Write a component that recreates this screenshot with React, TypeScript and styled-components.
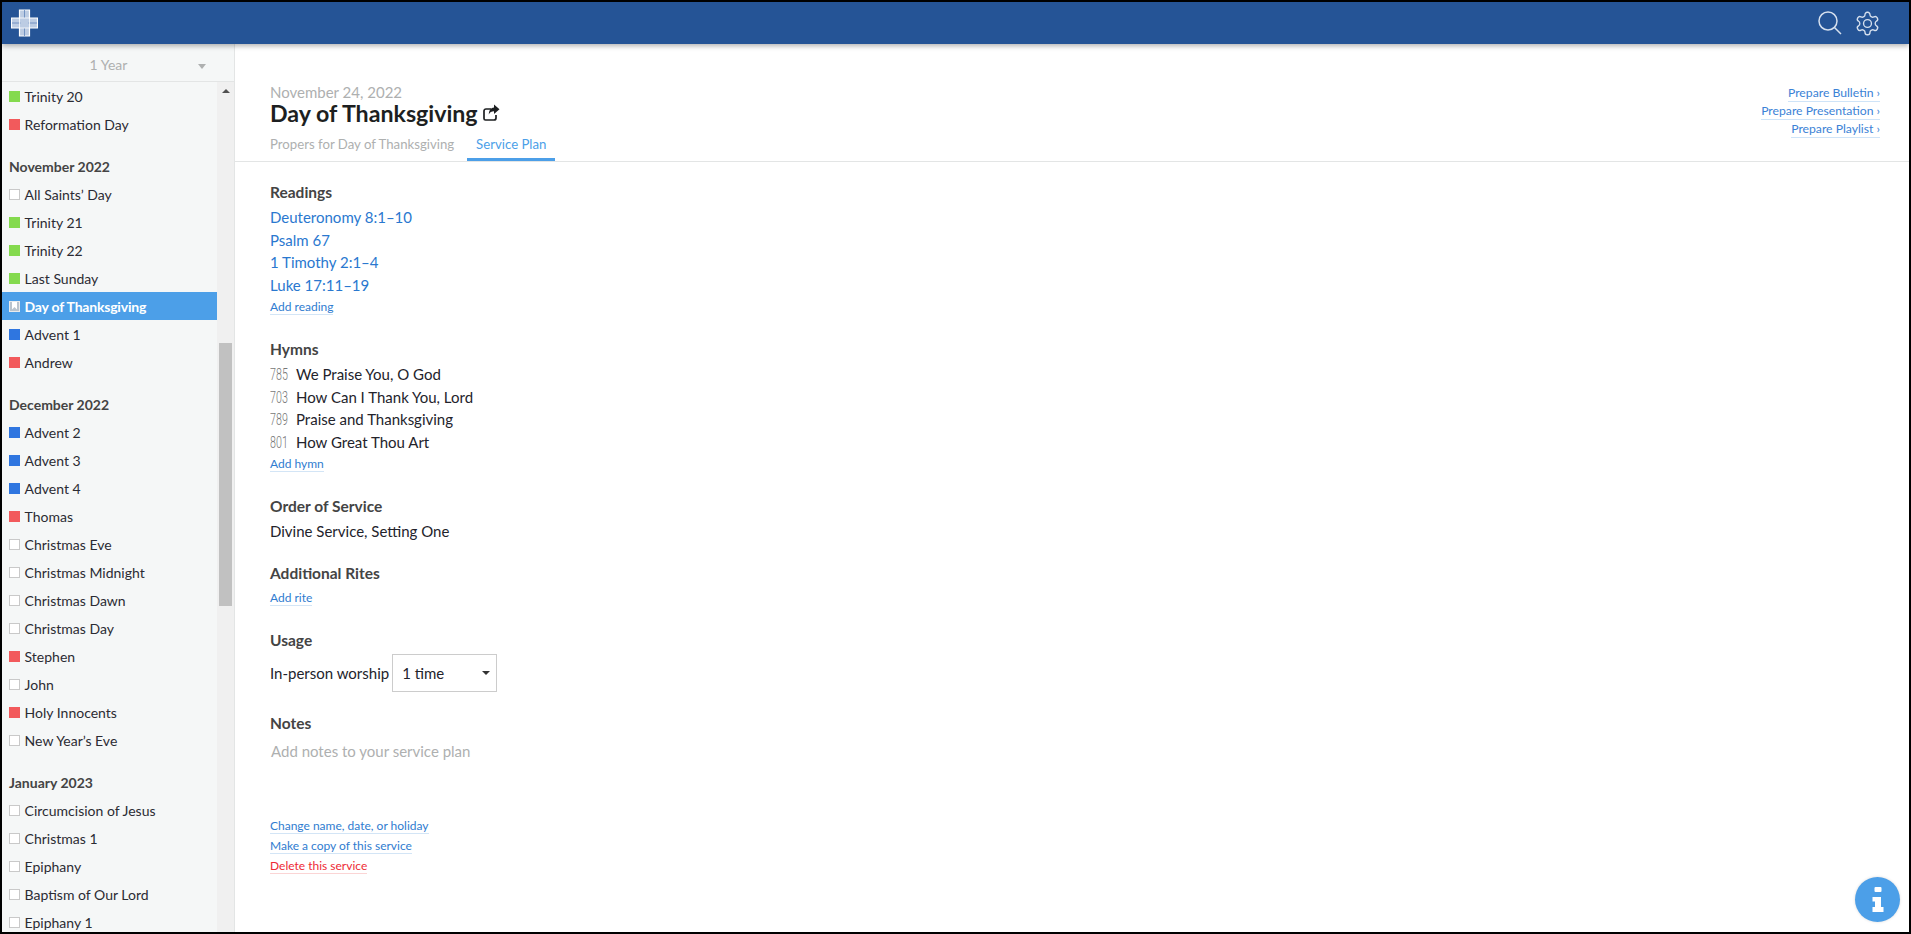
import React from "react";
import styled, { createGlobalStyle } from "styled-components";

const Global = createGlobalStyle`
  html, body { margin: 0; padding: 0; height: 100%; overflow: hidden; }
  body { font-family: Lato, "Open Sans", sans-serif; color: #222; background: #fff; }
  #root { height: 100%; }
  * { box-sizing: border-box; }
`;

const Frame = styled.div`
  width: 1911px; height: 934px; border: 2px solid #000; display: flex; flex-direction: column; overflow: hidden; position: relative; background: #fff;
`;
const Header = styled.header`
  height: 42px; flex: none; background: #255496; display: flex; align-items: center; justify-content: space-between;
  padding: 0 28px 0 9px; box-shadow: 0 2px 5px rgba(0,0,0,.3); position: relative; z-index: 2;
`;
const HeaderIcons = styled.div`display: flex; align-items: center; gap: 12px;`;
const Body = styled.div`display: flex; flex: 1; min-height: 0;`;
const Sidebar = styled.aside`
  width: 233px; flex: none; background: #f5f7f7; border-right: 1px solid #e3e5e5; display: flex; flex-direction: column; min-height: 0;
`;
const YearSelect = styled.div`
  height: 38px; flex: none; border-bottom: 1px solid #e3e5e5; display: flex; align-items: center; justify-content: center; position: relative;
  font-size: 14px; color: #aeb0b0; padding: 3px 19px 0 0;
`;
const YearCaret = styled.i`
  position: absolute; right: 28px; top: 20px; border: 4px solid transparent; border-top: 5px solid #aeb0b0; border-bottom: 0;
`;
const ListWrap = styled.div`display: flex; flex: 1; min-height: 0; overflow: hidden;`;
const List = styled.div`flex: 1; min-width: 0;`;
const Track = styled.div`width: 17px; flex: none; background: #f0f0f0; position: relative;`;
const Thumb = styled.div`position: absolute; left: 2px; right: 2px; top: 261px; height: 263px; background: #c1c1c1;`;
const TrackArrow = styled.i`
  position: absolute; left: 5px; top: 7px; border: 4px solid transparent; border-bottom: 4px solid #505050; border-top: 0;
`;
const Row = styled.div<{ $active?: boolean }>`
  height: 28px; display: flex; align-items: center; padding-left: 7px; gap: 4.6px; font-size: 14px; white-space: nowrap;
  background: ${p => (p.$active ? "#4c9fe8" : "transparent")};
  color: ${p => (p.$active ? "#fff" : "#2b2b33")};
  font-weight: ${p => (p.$active ? 700 : 400)};
  letter-spacing: ${p => (p.$active ? "-0.2px" : "0")};
`;
const Swatch = styled.span<{ $color?: string }>`
  width: 11px; height: 11px; flex: none; display: block;
  background: ${p => p.$color ?? "#fff"};
  border: ${p => (p.$color ? "none" : "1px solid #c9c9c9")};
`;
const ActiveMark = styled.span`
  width: 11px; height: 11px; flex: none; background: #b9c3cd; border: 1px solid #e8eaec; position: relative;
  &::after { content: ""; position: absolute; left: 2px; top: 0; width: 5px; height: 8px; background: #fff; clip-path: polygon(0 0,100% 0,100% 100%,50% 70%,0 100%); }
`;
const Month = styled.div`
  font-size: 14px; font-weight: 700; color: #444; height: 28px; margin-top: 14px; display: flex; align-items: center; padding-left: 7px;
`;
const Main = styled.main`flex: 1; min-width: 0; display: flex; flex-direction: column; position: relative;`;
const Top = styled.div`
  height: 118px; flex: none; border-bottom: 1px solid #e3e5e5; padding: 40px 0 0 35px; position: relative;
`;
const DateLine = styled.div`font-size: 15px; line-height: 17px; color: #aeb0b0;`;
const TitleRow = styled.div`display: flex; align-items: flex-start; gap: 5px; height: 26px;`;
const Title = styled.h1`font-size: 23.2px; line-height: 25px; margin: 0; font-weight: 700; color: #1d1f21;`;
const ShareSvg = styled.svg`margin-top: 3px; flex: none;`;
const Tabs = styled.div`display: flex; position: absolute; left: 35px; bottom: 0; height: 28px;`;
const Tab = styled.div<{ $active?: boolean }>`
  font-size: 13.2px; height: 28px; line-height: 23px; padding: 0 ${p => (p.$active ? "9px" : "0")}; margin-right: ${p => (p.$active ? "0" : "13px")};
  color: ${p => (p.$active ? "#4c9fe8" : "#aeb0b0")};
  border-bottom: 3px solid ${p => (p.$active ? "#4c9fe8" : "transparent")};
`;
const Prepare = styled.div`
  position: absolute; right: 29px; top: 41px; display: flex; flex-direction: column; align-items: flex-end; gap: 1px;
`;
const PrepareLink = styled.a`
  font-size: 12.2px; line-height: 16px; height: 17px; color: #3b82d6; border-bottom: 1px solid #cfe4f8;
`;
const Content = styled.div`padding: 22px 0 0 35px; display: flex; flex-direction: column;`;
const Section = styled.section<{ $gap?: number }>`margin-bottom: ${p => p.$gap ?? 20}px;`;
const Heading = styled.h2`font-size: 15.5px; line-height: 17px; font-weight: 700; color: #444; margin: 0 0 5px;`;
const Reading = styled.a`display: block; font-size: 15px; line-height: 22.7px; color: #2a78cf;`;
const Small = styled.a<{ $red?: boolean }>`
  display: block; width: fit-content; font-size: 12px; line-height: 14px; height: 15px; color: ${p => (p.$red ? "#ee2a36" : "#2f7cd0")};
  border-bottom: 1px solid ${p => (p.$red ? "#fbd5d5" : "#d3e5f6")};
`;
const AddLink = styled(Small)<{ $top?: number }>`margin-top: ${p => p.$top ?? 3}px;`;
const Hymn = styled.div`display: flex; font-size: 15px; line-height: 22.7px; color: #23232b;`;
const HymnNo = styled.span`
  width: 26px; font-family: Roboto, sans-serif; font-size: 17px; font-weight: 300; color: #777; display: inline-block;
  transform: scaleX(.63); transform-origin: left center; white-space: nowrap;
`;
const Plain = styled.div`font-size: 15px; line-height: 23px; color: #23232b;`;
const UsageRow = styled.div`display: flex; align-items: center; gap: 3px; margin-top: 4px; font-size: 15px; color: #23232b;`;
const Dropdown = styled.div`
  width: 105px; height: 38px; border: 1px solid #ccc; display: flex; align-items: center; padding-left: 9px; position: relative; font-size: 15px;
`;
const DropCaret = styled.i`
  position: absolute; right: 6px; top: 16px; border: 4px solid transparent; border-top: 4px solid #333; border-bottom: 0;
`;
const NotesHint = styled.div`font-size: 15px; line-height: 23px; color: #aeb0b0; margin: 8px 0 0 1px;`;
const Actions = styled.div`margin-top: 56px; display: flex; flex-direction: column; align-items: flex-start; gap: 5px;`;
const InfoButton = styled.div`
  position: absolute; right: 9px; bottom: 10px; width: 45px; height: 45px; border-radius: 50%; background: #4c9fe8; display: flex; align-items: center; justify-content: center;
  box-shadow: 0 0 3px rgba(0,0,0,.15);
`;

type Item = { n: string; c?: string; active?: boolean };
const G = "#84da4e", R = "#f25a5c", B = "#2f76e0";
const groups: { m?: string; items: Item[] }[] = [
  { items: [{ n: "Trinity 20", c: G }, { n: "Reformation Day", c: R }] },
  { m: "November 2022", items: [{ n: "All Saints’ Day" }, { n: "Trinity 21", c: G }, { n: "Trinity 22", c: G }, { n: "Last Sunday", c: G }, { n: "Day of Thanksgiving", active: true }, { n: "Advent 1", c: B }, { n: "Andrew", c: R }] },
  { m: "December 2022", items: [{ n: "Advent 2", c: B }, { n: "Advent 3", c: B }, { n: "Advent 4", c: B }, { n: "Thomas", c: R }, { n: "Christmas Eve" }, { n: "Christmas Midnight" }, { n: "Christmas Dawn" }, { n: "Christmas Day" }, { n: "Stephen", c: R }, { n: "John" }, { n: "Holy Innocents", c: R }, { n: "New Year’s Eve" }] },
  { m: "January 2023", items: [{ n: "Circumcision of Jesus" }, { n: "Christmas 1" }, { n: "Epiphany" }, { n: "Baptism of Our Lord" }, { n: "Epiphany 1" }] },
];

const Logo = () => (
  <svg width="27" height="28" viewBox="0 0 27 28">
    <path d="M8.500 1h10v8h8v10h-8v8h-10v-8h-8v-10h8z" fill="#bccce3" stroke="#fff" strokeWidth="1.200" />
    <path d="M13.500 1v8M13.500 19v8M1 14h8.500M17.500 14h8.500" fill="none" stroke="#5f84ba" strokeWidth=".8" />
    <path d="M8.500 9v10M18.500 9v10M8.500 9h10M8.500 19h10" fill="none" stroke="#fff" strokeWidth=".8" />
  </svg>
);
const SearchIcon = () => (
  <svg width="24" height="24" viewBox="0 0 24 24" fill="none" stroke="#d6e0ee" strokeWidth="1.500">
    <circle cx="10" cy="10" r="9" />
    <path d="M16.500 16.500L23 23" />
  </svg>
);
const GearIcon = () => (
  <svg width="27" height="27" viewBox="0 0 24 24" fill="none" stroke="#d6e0ee" strokeWidth="1.200" strokeLinecap="round" strokeLinejoin="round">
    <path d="M12.220 2h-.44a2 2 0 0 0-2 2v.180a2 2 0 0 1-1 1.730l-.43.250a2 2 0 0 1-2 0l-.150-.080a2 2 0 0 0-2.730.730l-.220.380a2 2 0 0 0 .730 2.730l.150.100a2 2 0 0 1 1 1.720v.510a2 2 0 0 1-1 1.740l-.150.090a2 2 0 0 0-.730 2.730l.220.380a2 2 0 0 0 2.730.730l.150-.080a2 2 0 0 1 2 0l.43.250a2 2 0 0 1 1 1.730V20a2 2 0 0 0 2 2h.440a2 2 0 0 0 2-2v-.180a2 2 0 0 1 1-1.730l.43-.250a2 2 0 0 1 2 0l.150.080a2 2 0 0 0 2.730-.730l.220-.390a2 2 0 0 0-.730-2.730l-.150-.080a2 2 0 0 1-1-1.740v-.500a2 2 0 0 1 1-1.740l.150-.090a2 2 0 0 0 .730-2.730l-.220-.380a2 2 0 0 0-2.730-.730l-.150.080a2 2 0 0 1-2 0l-.43-.250a2 2 0 0 1-1-1.730V4a2 2 0 0 0-2-2z" />
    <circle cx="12" cy="12" r="3.500" />
  </svg>
);
const ShareIcon = () => (
  <ShareSvg width="17" height="17" viewBox="0 0 17 17">
    <path d="M8 5H3A2 2 0 0 0 1 7v7.500A1.500 1.500 0 0 0 2.500 16H11a2 2 0 0 0 2-2v-3" fill="none" stroke="#1d1f21" strokeWidth="1.700" />
    <path d="M11 0.500l5.500 4.800L11 10V7.300C8.500 7.300 6.800 8 5.800 10.500 5.800 6.500 8 3.700 11 3.500z" fill="#1d1f21" />
  </ShareSvg>
);
const InfoIcon = () => (
  <svg width="14" height="25" viewBox="0 0 14 25" fill="#fff">
    <rect x="3.500" y="0" width="7" height="5" rx="1" />
    <path d="M1.500 10h8.500v10h2.500v5h-11v-5H4v-5.500H1.500z" />
  </svg>
);

export default function App() {
  return (
    <Frame>
      <Global />
      <Header>
        <Logo />
        <HeaderIcons><SearchIcon /><GearIcon /></HeaderIcons>
      </Header>
      <Body>
        <Sidebar>
          <YearSelect>1 Year<YearCaret /></YearSelect>
          <ListWrap>
            <List>
              {groups.map((g, i) => (
                <div key={i}>
                  {g.m && <Month>{g.m}</Month>}
                  {g.items.map(it => (
                    <Row key={it.n} $active={it.active}>
                      {it.active ? <ActiveMark /> : <Swatch $color={it.c} />}
                      {it.n}
                    </Row>
                  ))}
                </div>
              ))}
            </List>
            <Track><TrackArrow /><Thumb /></Track>
          </ListWrap>
        </Sidebar>
        <Main>
          <Top>
            <DateLine>November 24, 2022</DateLine>
            <TitleRow><Title>Day of Thanksgiving</Title><ShareIcon /></TitleRow>
            <Tabs>
              <Tab>Propers for Day of Thanksgiving</Tab>
              <Tab $active>Service Plan</Tab>
            </Tabs>
            <Prepare>
              <PrepareLink>Prepare Bulletin ›</PrepareLink>
              <PrepareLink>Prepare Presentation ›</PrepareLink>
              <PrepareLink>Prepare Playlist ›</PrepareLink>
            </Prepare>
          </Top>
          <Content>
            <Section $gap={26}>
              <Heading>Readings</Heading>
              <Reading>Deuteronomy 8:1–10</Reading>
              <Reading>Psalm 67</Reading>
              <Reading>1 Timothy 2:1–4</Reading>
              <Reading>Luke 17:11–19</Reading>
              <AddLink>Add reading</AddLink>
            </Section>
            <Section $gap={26}>
              <Heading>Hymns</Heading>
              <Hymn><HymnNo>785</HymnNo>We Praise You, O God</Hymn>
              <Hymn><HymnNo>703</HymnNo>How Can I Thank You, Lord</Hymn>
              <Hymn><HymnNo>789</HymnNo>Praise and Thanksgiving</Hymn>
              <Hymn><HymnNo>801</HymnNo>How Great Thou Art</Hymn>
              <AddLink>Add hymn</AddLink>
            </Section>
            <Section $gap={22}>
              <Heading>Order of Service</Heading>
              <Plain>Divine Service, Setting One</Plain>
            </Section>
            <Section $gap={26}>
              <Heading>Additional Rites</Heading>
              <AddLink $top={9}>Add rite</AddLink>
            </Section>
            <Section $gap={23}>
              <Heading>Usage</Heading>
              <UsageRow>In-person worship<Dropdown>1 time<DropCaret /></Dropdown></UsageRow>
            </Section>
            <Section $gap={0}>
              <Heading>Notes</Heading>
              <NotesHint>Add notes to your service plan</NotesHint>
            </Section>
            <Actions>
              <Small>Change name, date, or holiday</Small>
              <Small>Make a copy of this service</Small>
              <Small $red>Delete this service</Small>
            </Actions>
          </Content>
          <InfoButton><InfoIcon /></InfoButton>
        </Main>
      </Body>
    </Frame>
  );
}
